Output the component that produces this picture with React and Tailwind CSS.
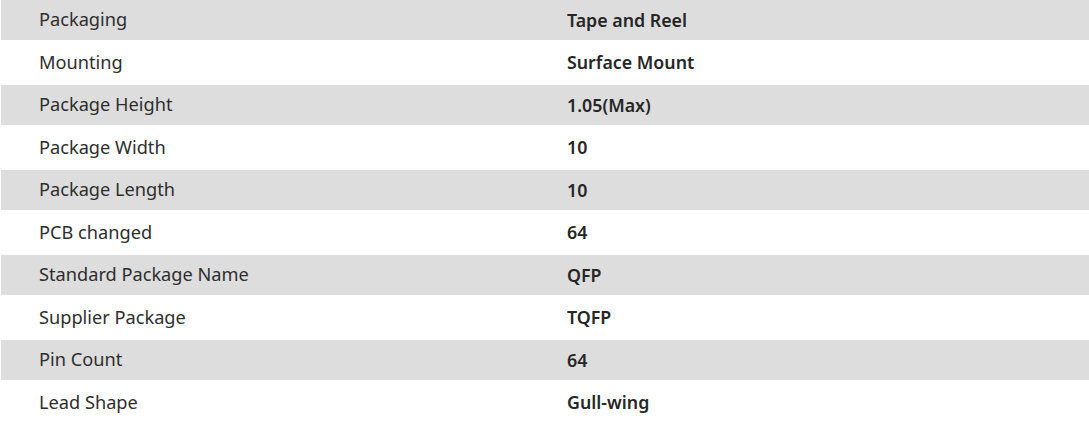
const specs = [
  ['Packaging', 'Tape and Reel'],
  ['Mounting', 'Surface Mount'],
  ['Package Height', '1.05(Max)'],
  ['Package Width', '10'],
  ['Package Length', '10'],
  ['PCB changed', '64'],
  ['Standard Package Name', 'QFP'],
  ['Supplier Package', 'TQFP'],
  ['Pin Count', '64'],
  ['Lead Shape', 'Gull-wing'],
]

export default function App() {
  return (
    <div className="w-[1089px] h-[424px] overflow-hidden bg-white pl-px font-['Noto_Sans',sans-serif] text-[#262626]">
      {specs.map(([label, value], i) => (
        <div
          key={label}
          className={i % 2 === 0 ? 'flex items-center h-[40px] bg-[#dddddd]' : 'flex items-center h-[45px] bg-white'}
        >
          <div className="w-[566px] pl-[38px] text-[18.2px] text-[#2e2e2e]">{label}</div>
          <div className="text-[17.8px] font-semibold">{value}</div>
        </div>
      ))}
    </div>
  )
}
